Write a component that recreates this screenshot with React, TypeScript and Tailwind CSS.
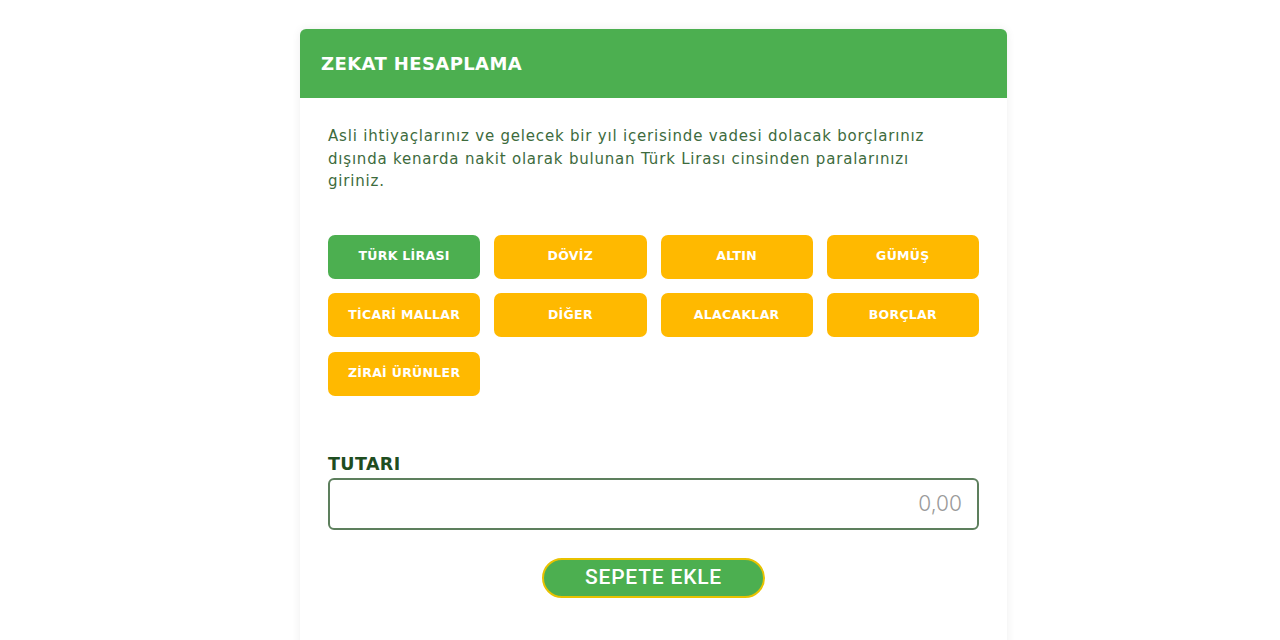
import React from "react";

const yellow = ["DÖVİZ", "ALTIN", "GÜMÜŞ", "TİCARİ MALLAR", "DİĞER", "ALACAKLAR", "BORÇLAR", "ZİRAİ ÜRÜNLER"];

export default function App() {
  return (
    <div className="min-h-[640px] bg-white pl-[300px] pt-[29px]" style={{ fontFamily: "'DejaVu Sans', Inter, sans-serif" }}>
      <div className="w-[707px] rounded-t-[6px] bg-white pb-[60px] shadow-[0_0_10px_rgba(0,0,0,0.07)]">
        <div className="flex h-[69px] items-center rounded-t-[6px] bg-[#4caf50] px-[21px]">
          <h1 className="text-[18px] font-bold tracking-[0.4px] text-white">ZEKAT HESAPLAMA</h1>
        </div>
        <div className="px-[28px] pt-[27px]">
          <p className="whitespace-nowrap text-[15px] leading-[22.5px] tracking-[0.8px] text-[#3d6b3d]">
            Asli ihtiyaçlarınız ve gelecek bir yıl içerisinde vadesi dolacak borçlarınız
            <br />
            dışında kenarda nakit olarak bulunan Türk Lirası cinsinden paralarınızı
            <br />
            giriniz.
          </p>
          <div className="mt-[42px] grid grid-cols-4 gap-x-[14px] gap-y-[14.5px]">
            <button className="h-[44px] rounded-[7px] bg-[#4caf50] text-[12.5px] font-bold tracking-[0.3px] text-white">TÜRK LİRASI</button>
            {yellow.map((t) => (
              <button key={t} className="h-[44px] rounded-[7px] bg-[#ffb900] text-[12.5px] font-bold tracking-[0.3px] text-white">
                {t}
              </button>
            ))}
          </div>
          <label className="mt-[57px] block text-[17.5px] font-bold leading-[22px] tracking-[0.4px] text-[#1f4d1f]">TUTARI</label>
          <div className="mt-[3px] flex h-[52px] items-center justify-end rounded-[6px] border-2 border-[#5d7f5d] px-[15px]">
            <span className="text-[21px] font-light text-[#9a9a9a]" style={{ fontFamily: "Inter, sans-serif" }}>0,00</span>
          </div>
          <div className="mt-[28px] flex justify-center">
            <button
              className="h-[40px] w-[223px] rounded-full border-2 border-[#e8c200] bg-[#4caf50] text-[21px] font-medium tracking-[0.8px] text-white"
              style={{ fontFamily: "Roboto, sans-serif" }}
            >
              SEPETE EKLE
            </button>
          </div>
        </div>
      </div>
    </div>
  );
}
